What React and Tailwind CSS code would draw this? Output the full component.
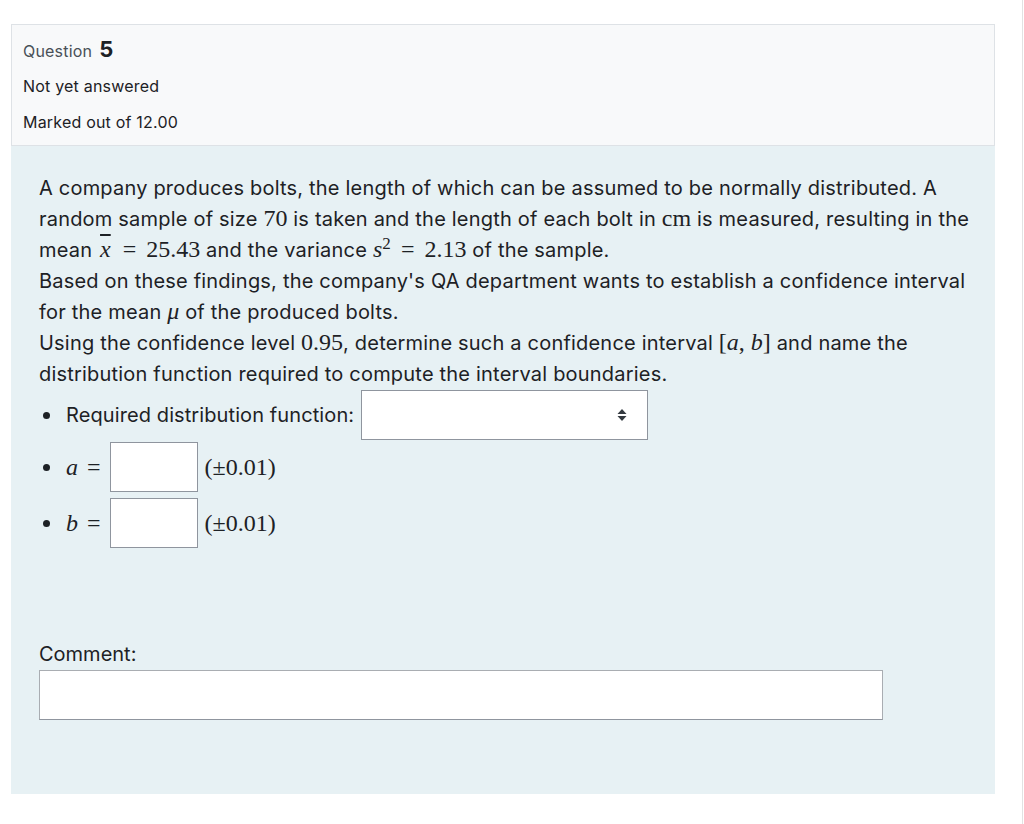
import React from "react";

const M = ({ children, i, className = "" }) => (
  <span className={`font-['Liberation_Serif',serif] text-[24px] leading-none tracking-normal ${i ? "italic" : ""} ${className}`}>
    {children}
  </span>
);

function SelectArrows() {
  return (
    <svg width="10" height="14" viewBox="0 0 10 14" className="text-[#343a40]">
      <path d="M5 1 L9.5 6 H0.5 Z" fill="currentColor" />
      <path d="M5 13 L9.5 8 H0.5 Z" fill="currentColor" />
    </svg>
  );
}

function Dot() {
  return <span className="w-[7px] h-[7px] rounded-full bg-[#1d2125] ml-[4px] mr-[16px] shrink-0" />;
}

export default function App() {
  return (
    <div className="min-h-[824px] w-[1023px] bg-white border-r border-[#e2e2e2] font-['Inter',sans-serif] text-[#1d2125] pt-6">
      <div className="ml-[11px] w-[984px]">
        {/* question info */}
        <div className="bg-[#f8f9fa] border border-[#dee2e6] px-[11px] pt-[11px] pb-[10px] text-[16px] tracking-[0.2px] leading-[26px]">
          <div className="text-[#495057] flex items-baseline gap-[7px]">
            Question <span className="text-[22px] font-bold text-[#1d2125]">5</span>
          </div>
          <div className="mt-[9px]">Not yet answered</div>
          <div className="mt-[10px]">Marked out of 12.00</div>
        </div>

        {/* question body */}
        <div className="bg-[#e7f1f4] h-[648px] pl-7 pr-5 pt-[27px] text-[20px] tracking-[0.2px]">
          <div className="leading-[31px] whitespace-nowrap">
            <p>
              A company produces bolts, the length of which can be assumed to be normally distributed. A
              <br />
              random sample of size <M>70</M> is taken and the length of each bolt in <M className="text-[22px]">cm</M> is measured, resulting in the
              <br />
              mean <M i className="overline mx-[2px]">x</M>
              <M className="mx-[10px]">=</M>
              <M>25.43</M> and the variance <M i>s</M>
              <sup className="font-['Liberation_Serif',serif] text-[17px] leading-none">2</sup>
              <M className="mx-[10px]">=</M>
              <M>2.13</M> of the sample.
            </p>
            <p>
              Based on these findings, the company's QA department wants to establish a confidence interval
              <br />
              for the mean <M i>μ</M> of the produced bolts.
            </p>
            <p>
              Using the confidence level <M>0.95</M>, determine such a confidence interval{" "}
              <M>[</M>
              <M i>a</M>
              <M>, </M>
              <M i>b</M>
              <M>]</M> and name the
              <br />
              distribution function required to compute the interval boundaries.
            </p>
          </div>

          <ul className="flex flex-col tracking-[0.1px]">
            <li className="flex items-center h-[50px]">
              <Dot />
              <span className="mr-[7px]">Required distribution function:</span>
              <div className="w-[287px] h-[50px] bg-white border border-[#8f959e] flex items-center justify-end pr-[20px]">
                <SelectArrows />
              </div>
            </li>
            <li className="flex items-center h-[50px] mt-[2px]">
              <Dot />
              <M i>a</M>
              <M className="ml-[9px]">=</M>
              <div className="w-[88px] h-[50px] bg-white border border-[#8f959e] ml-[9px] mr-[7px]" />
              <M>(±0.01)</M>
            </li>
            <li className="flex items-center h-[50px] mt-[6px]">
              <Dot />
              <M i>b</M>
              <M className="ml-[9px]">=</M>
              <div className="w-[88px] h-[50px] bg-white border border-[#8f959e] ml-[9px] mr-[7px]" />
              <M>(±0.01)</M>
            </li>
          </ul>

          <div className="mt-[91px] leading-[31px] tracking-normal">Comment:</div>
          <div className="w-[844px] h-[50px] bg-white border border-[#a9adb2] border-b-[#8f959e]" />
        </div>
      </div>
    </div>
  );
}
